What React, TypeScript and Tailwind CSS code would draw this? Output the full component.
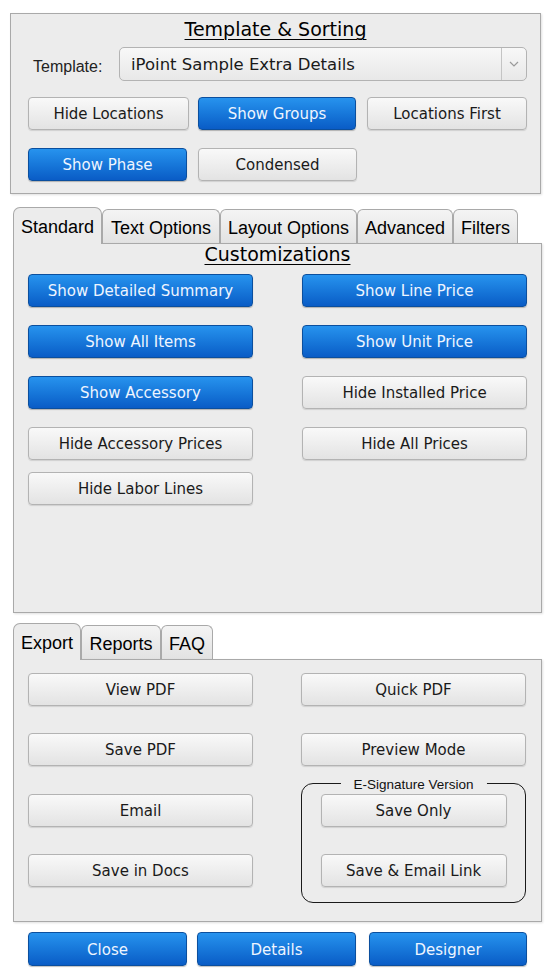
import React from "react";

const dv = { fontFamily: '"DejaVu Sans", Verdana, sans-serif' };
const ar = { fontFamily: '"Liberation Sans", Arial, sans-serif' };

function Btn({
  label,
  blue,
  w,
  className = "",
}: {
  label: string;
  blue?: boolean;
  w: string;
  className?: string;
}) {
  const base =
    "h-[33px] rounded-[4px] border flex items-center justify-center pt-[2px] text-[15px] shrink-0 ";
  const look = blue
    ? "border-[#0b4f9e] bg-gradient-to-b from-[#2793ee] to-[#0a5cc6] text-[#eef5ff] shadow-[0_1px_1px_rgba(0,0,0,0.25)]"
    : "border-[#b3b3b3] bg-gradient-to-b from-[#f9f9f9] to-[#e3e3e3] text-[#1a1a1a] shadow-[0_1px_1px_rgba(0,0,0,0.12)]";
  return (
    <div className={base + look + " " + w + " " + className} style={dv}>
      {label}
    </div>
  );
}

function Tab({ label, active, w }: { label: string; active?: boolean; w: string }) {
  if (active) {
    return (
      <div
        className={
          "relative z-10 -mb-px h-[37px] rounded-t-[7px] border border-b-0 border-[#a9a9a9] bg-[#ececec] flex items-center justify-center pt-[3px] text-[18px] text-black shrink-0 " +
          w
        }
        style={ar}
      >
        {label}
      </div>
    );
  }
  return (
    <div
      className={
        "h-[34px] rounded-t-[6px] border border-b-0 border-[#a9a9a9] bg-gradient-to-b from-[#f4f4f4] to-[#e2e2e2] flex items-center justify-center pt-[3px] text-[18px] text-black shrink-0 " +
        w
      }
      style={ar}
    >
      {label}
    </div>
  );
}

export default function App() {
  return (
    <div className="w-[554px] h-[976px] bg-white overflow-hidden flex flex-col">
      {/* Template & Sorting */}
      <div className="ml-[10px] mt-[13px] w-[531px] h-[181px] border border-[#a9a9a9] bg-[#ececec] shadow-[1px_1px_2px_rgba(0,0,0,0.12)] flex flex-col">
        <div
          className="h-[31px] flex items-center justify-center text-[19px] text-black underline underline-offset-[3px] decoration-1"
          style={dv}
        >
          Template &amp; Sorting
        </div>
        <div className="mt-[2px] flex items-center">
          <div className="ml-[22px] w-[86px] text-[16px] text-[#222] pt-[6px]" style={ar}>
            Template:
          </div>
          <div className="w-[408px] h-[34px] rounded-[5px] border border-[#b3b3b3] bg-gradient-to-b from-[#f8f8f8] to-[#e8e8e8] flex items-stretch">
            <div className="flex-1 flex items-center pl-[11px] pt-[3px] text-[16.5px] text-[#1a1a1a]" style={dv}>
              iPoint Sample Extra Details
            </div>
            <div className="w-[25px] border-l border-[#c4c4c4] flex items-center justify-center">
              <svg width="10" height="6" viewBox="0 0 10 6">
                <path d="M1 1 L5 5 L9 1" fill="none" stroke="#9a9a9a" strokeWidth="1.2" />
              </svg>
            </div>
          </div>
        </div>
        <div className="mt-[16px] flex ml-[17px]">
          <Btn label="Hide Locations" w="w-[161px]" />
          <Btn label="Show Groups" blue w="w-[158px]" className="ml-[9px]" />
          <Btn label="Locations First" w="w-[160px]" className="ml-[11px]" />
        </div>
        <div className="mt-[18px] flex ml-[17px]">
          <Btn label="Show Phase" blue w="w-[159px]" />
          <Btn label="Condensed" w="w-[159px]" className="ml-[11px]" />
        </div>
      </div>

      {/* Customizations tabs */}
      <div className="ml-[13px] mt-[13px] flex flex-col w-[529px]">
        <div className="flex items-end">
          <Tab label="Standard" active w="w-[89px]" />
          <Tab label="Text Options" w="w-[118px]" />
          <Tab label="Layout Options" w="w-[137px]" />
          <Tab label="Advanced" w="w-[96px]" />
          <Tab label="Filters" w="w-[65px]" />
        </div>
        <div className="h-[370px] border border-[#a9a9a9] bg-[#ececec] shadow-[1px_1px_2px_rgba(0,0,0,0.12)] flex flex-col">
          <div
            className="h-[20px] flex items-center justify-center text-[19px] text-black underline underline-offset-[3px] decoration-1"
            style={dv}
          >
            Customizations
          </div>
          <div className="mt-[10px] flex pl-[14px]">
            <div className="flex flex-col w-[225px]">
              <Btn label="Show Detailed Summary" blue w="w-[225px]" />
              <Btn label="Show All Items" blue w="w-[225px]" className="mt-[18px]" />
              <Btn label="Show Accessory" blue w="w-[225px]" className="mt-[18px]" />
              <Btn label="Hide Accessory Prices" w="w-[225px]" className="mt-[18px]" />
              <Btn label="Hide Labor Lines" w="w-[225px]" className="mt-[12px]" />
            </div>
            <div className="flex flex-col w-[225px] ml-[49px]">
              <Btn label="Show Line Price" blue w="w-[225px]" />
              <Btn label="Show Unit Price" blue w="w-[225px]" className="mt-[18px]" />
              <Btn label="Hide Installed Price" w="w-[225px]" className="mt-[18px]" />
              <Btn label="Hide All Prices" w="w-[225px]" className="mt-[18px]" />
            </div>
          </div>
        </div>
      </div>

      {/* Export tabs */}
      <div className="ml-[13px] mt-[10px] flex flex-col w-[529px]">
        <div className="flex items-end">
          <Tab label="Export" active w="w-[68px]" />
          <Tab label="Reports" w="w-[80px]" />
          <Tab label="FAQ" w="w-[52px]" />
        </div>
        <div className="h-[263px] border border-[#a9a9a9] bg-[#ececec] shadow-[1px_1px_2px_rgba(0,0,0,0.12)] flex pl-[14px] pt-[13px]">
          <div className="flex flex-col w-[225px]">
            <Btn label="View PDF" w="w-[225px]" />
            <Btn label="Save PDF" w="w-[225px]" className="mt-[27px]" />
            <Btn label="Email" w="w-[225px]" className="mt-[28px]" />
            <Btn label="Save in Docs" w="w-[225px]" className="mt-[27px]" />
          </div>
          <div className="flex flex-col w-[225px] ml-[48px]">
            <Btn label="Quick PDF" w="w-[225px]" />
            <Btn label="Preview Mode" w="w-[225px]" className="mt-[27px]" />
            <div className="relative mt-[17px] h-[120px] w-[225px] rounded-[12px] border-[1.5px] border-[#1a1a1a] flex flex-col items-center">
              <div
                className="absolute -top-[6px] left-1/2 -translate-x-1/2 bg-[#ececec] px-[13px] text-[13.5px] leading-[14px] text-[#111] whitespace-nowrap"
                style={ar}
              >
                E-Signature Version
              </div>
              <Btn label="Save Only" w="w-[186px]" className="mt-[10px] relative" />
              <Btn label="Save & Email Link" w="w-[186px]" className="mt-[27px]" />
            </div>
          </div>
        </div>
      </div>

      {/* Bottom buttons */}
      <div className="ml-[28px] mt-[10px] flex">
        <Btn label="Close" blue w="w-[159px]" className="h-[34px]" />
        <Btn label="Details" blue w="w-[159px]" className="ml-[10px] h-[34px]" />
        <Btn label="Designer" blue w="w-[158px]" className="ml-[13px] h-[34px]" />
      </div>
    </div>
  );
}
